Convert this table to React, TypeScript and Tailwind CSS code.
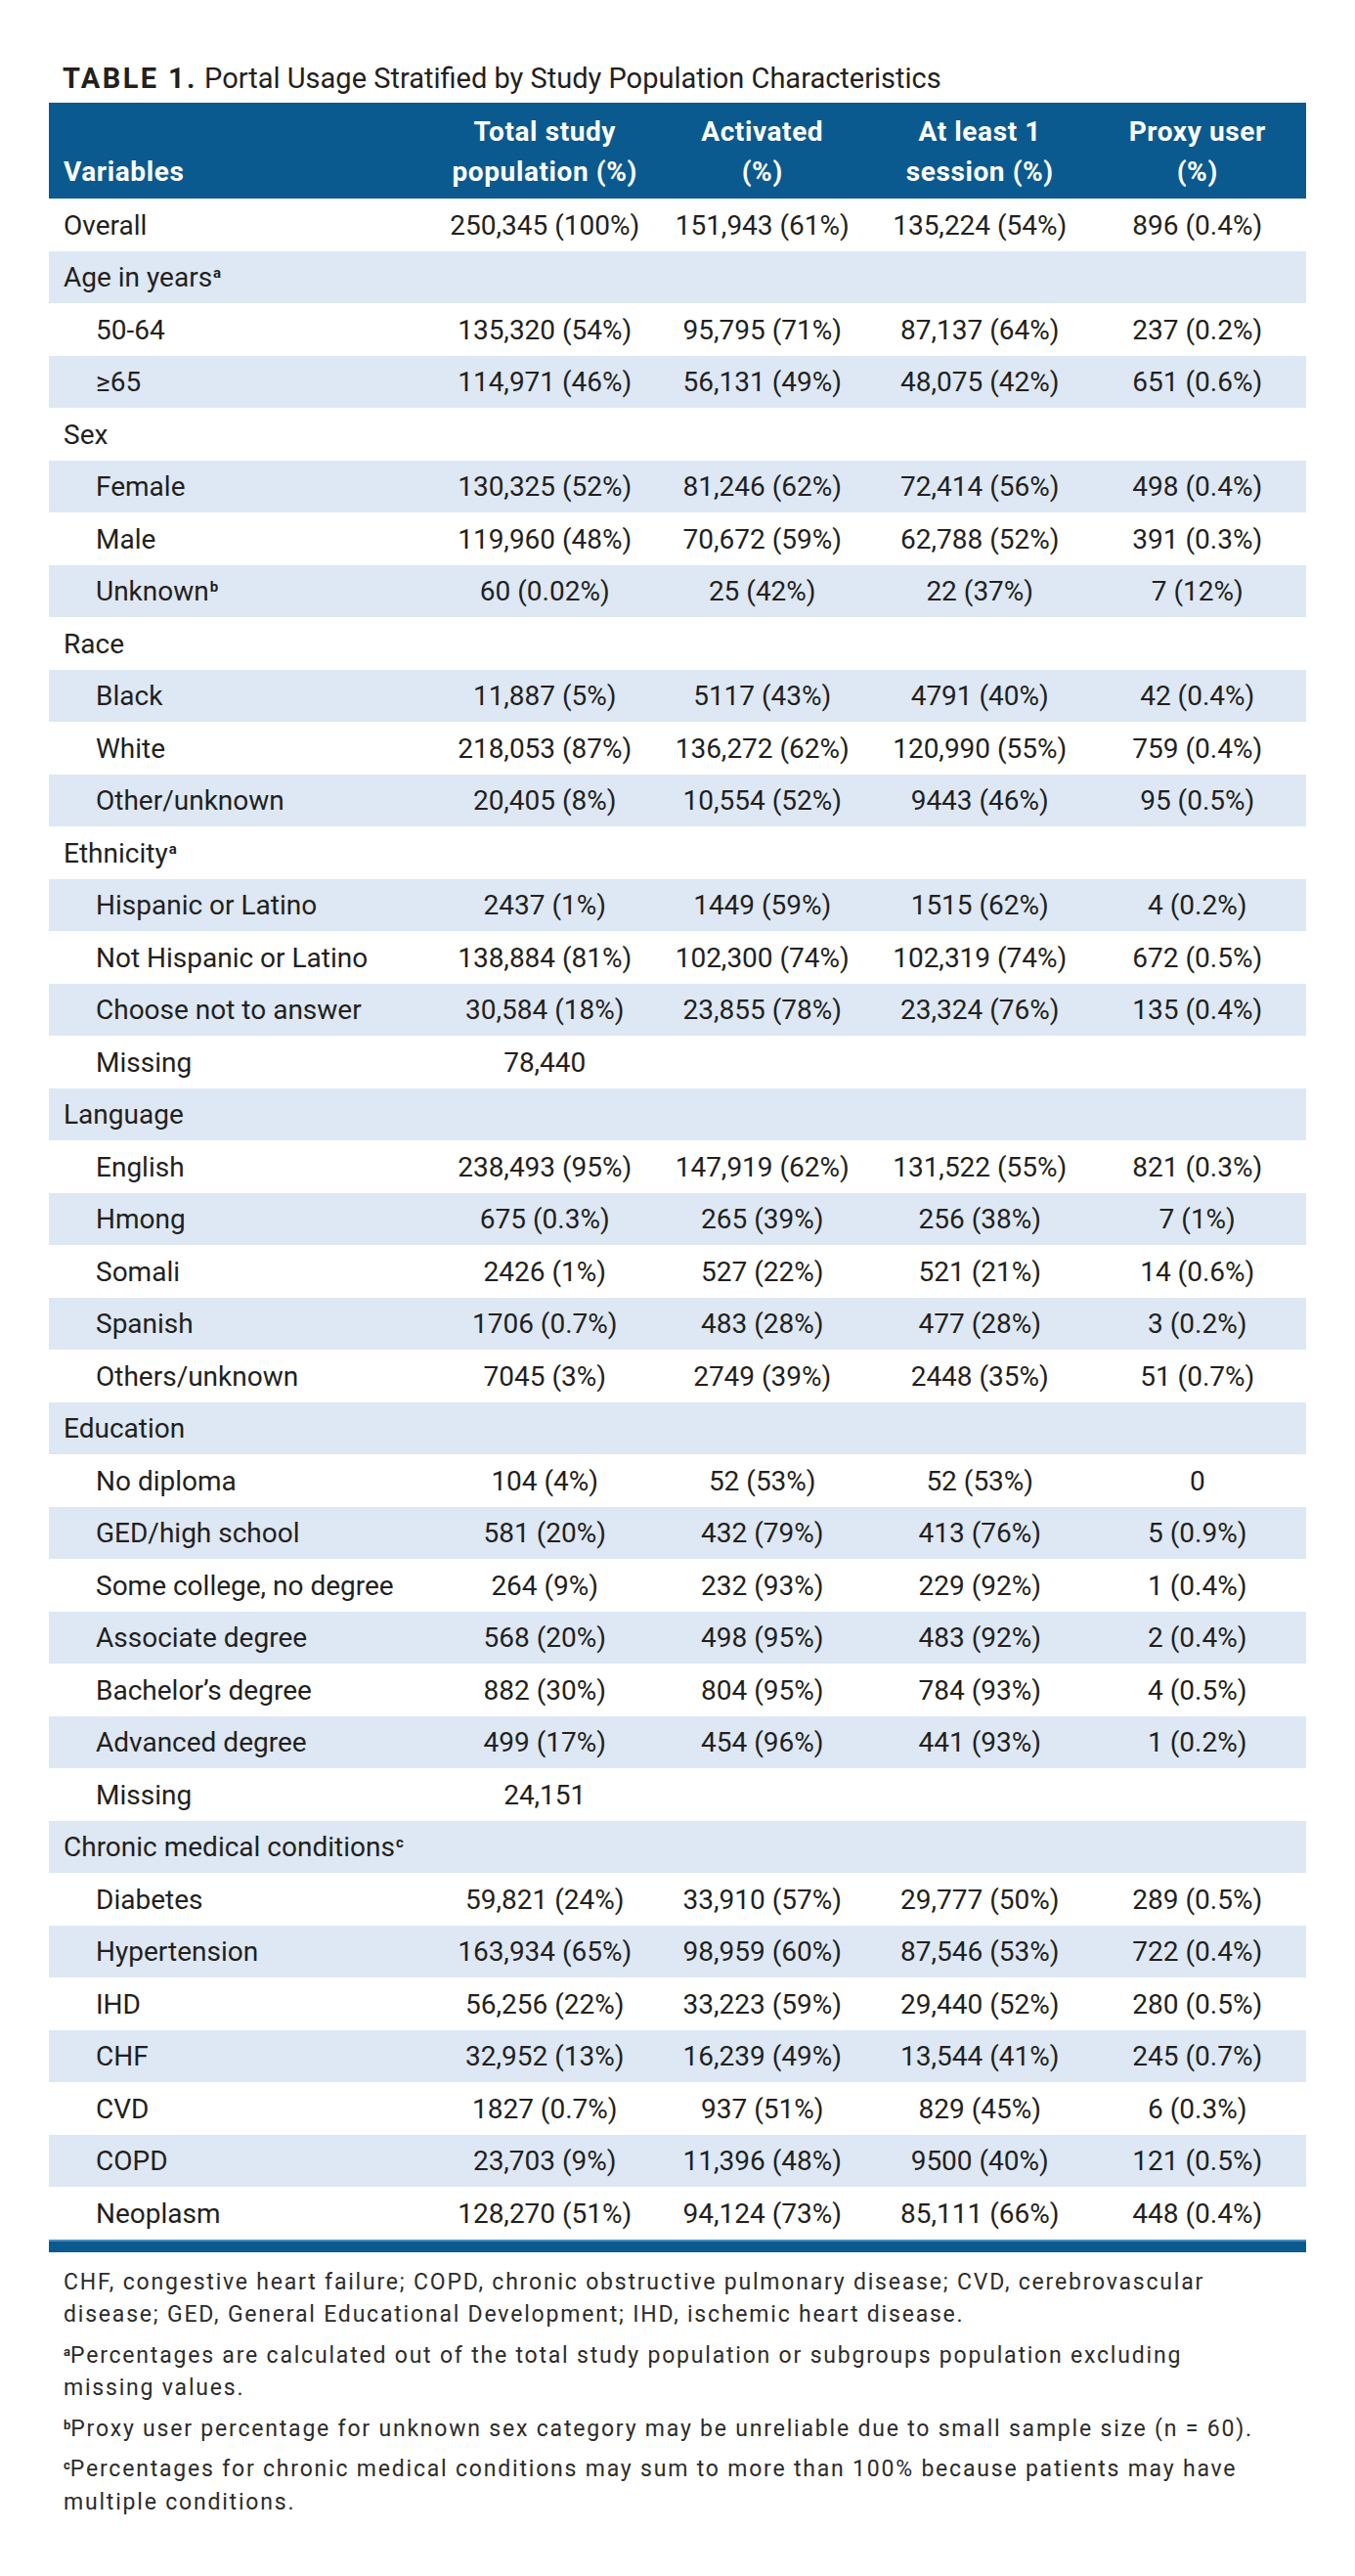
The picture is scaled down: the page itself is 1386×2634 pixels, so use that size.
import React from "react";

type Row = { label: React.ReactNode; indent?: boolean; values?: string[] };

const Sup = ({ c }: { c: string }) => (
  <span className="relative top-[-9px] ml-[1px] text-[15px] font-bold leading-none">{c}</span>
);

const rows: Row[] = [
  { label: "Overall", values: ["250,345 (100%)", "151,943 (61%)", "135,224 (54%)", "896 (0.4%)"] },
  { label: <>Age in years<Sup c="a" /></> },
  { label: "50-64", indent: true, values: ["135,320 (54%)", "95,795 (71%)", "87,137 (64%)", "237 (0.2%)"] },
  { label: "≥65", indent: true, values: ["114,971 (46%)", "56,131 (49%)", "48,075 (42%)", "651 (0.6%)"] },
  { label: "Sex" },
  { label: "Female", indent: true, values: ["130,325 (52%)", "81,246 (62%)", "72,414 (56%)", "498 (0.4%)"] },
  { label: "Male", indent: true, values: ["119,960 (48%)", "70,672 (59%)", "62,788 (52%)", "391 (0.3%)"] },
  { label: <>Unknown<Sup c="b" /></>, indent: true, values: ["60 (0.02%)", "25 (42%)", "22 (37%)", "7 (12%)"] },
  { label: "Race" },
  { label: "Black", indent: true, values: ["11,887 (5%)", "5117 (43%)", "4791 (40%)", "42 (0.4%)"] },
  { label: "White", indent: true, values: ["218,053 (87%)", "136,272 (62%)", "120,990 (55%)", "759 (0.4%)"] },
  { label: "Other/unknown", indent: true, values: ["20,405 (8%)", "10,554 (52%)", "9443 (46%)", "95 (0.5%)"] },
  { label: <>Ethnicity<Sup c="a" /></> },
  { label: "Hispanic or Latino", indent: true, values: ["2437 (1%)", "1449 (59%)", "1515 (62%)", "4 (0.2%)"] },
  { label: "Not Hispanic or Latino", indent: true, values: ["138,884 (81%)", "102,300 (74%)", "102,319 (74%)", "672 (0.5%)"] },
  { label: "Choose not to answer", indent: true, values: ["30,584 (18%)", "23,855 (78%)", "23,324 (76%)", "135 (0.4%)"] },
  { label: "Missing", indent: true, values: ["78,440", "", "", ""] },
  { label: "Language" },
  { label: "English", indent: true, values: ["238,493 (95%)", "147,919 (62%)", "131,522 (55%)", "821 (0.3%)"] },
  { label: "Hmong", indent: true, values: ["675 (0.3%)", "265 (39%)", "256 (38%)", "7 (1%)"] },
  { label: "Somali", indent: true, values: ["2426 (1%)", "527 (22%)", "521 (21%)", "14 (0.6%)"] },
  { label: "Spanish", indent: true, values: ["1706 (0.7%)", "483 (28%)", "477 (28%)", "3 (0.2%)"] },
  { label: "Others/unknown", indent: true, values: ["7045 (3%)", "2749 (39%)", "2448 (35%)", "51 (0.7%)"] },
  { label: "Education" },
  { label: "No diploma", indent: true, values: ["104 (4%)", "52 (53%)", "52 (53%)", "0"] },
  { label: "GED/high school", indent: true, values: ["581 (20%)", "432 (79%)", "413 (76%)", "5 (0.9%)"] },
  { label: "Some college, no degree", indent: true, values: ["264 (9%)", "232 (93%)", "229 (92%)", "1 (0.4%)"] },
  { label: "Associate degree", indent: true, values: ["568 (20%)", "498 (95%)", "483 (92%)", "2 (0.4%)"] },
  { label: "Bachelor’s degree", indent: true, values: ["882 (30%)", "804 (95%)", "784 (93%)", "4 (0.5%)"] },
  { label: "Advanced degree", indent: true, values: ["499 (17%)", "454 (96%)", "441 (93%)", "1 (0.2%)"] },
  { label: "Missing", indent: true, values: ["24,151", "", "", ""] },
  { label: <>Chronic medical conditions<Sup c="c" /></> },
  { label: "Diabetes", indent: true, values: ["59,821 (24%)", "33,910 (57%)", "29,777 (50%)", "289 (0.5%)"] },
  { label: "Hypertension", indent: true, values: ["163,934 (65%)", "98,959 (60%)", "87,546 (53%)", "722 (0.4%)"] },
  { label: "IHD", indent: true, values: ["56,256 (22%)", "33,223 (59%)", "29,440 (52%)", "280 (0.5%)"] },
  { label: "CHF", indent: true, values: ["32,952 (13%)", "16,239 (49%)", "13,544 (41%)", "245 (0.7%)"] },
  { label: "CVD", indent: true, values: ["1827 (0.7%)", "937 (51%)", "829 (45%)", "6 (0.3%)"] },
  { label: "COPD", indent: true, values: ["23,703 (9%)", "11,396 (48%)", "9500 (40%)", "121 (0.5%)"] },
  { label: "Neoplasm", indent: true, values: ["128,270 (51%)", "94,124 (73%)", "85,111 (66%)", "448 (0.4%)"] },
];

const FootSup = ({ c }: { c: string }) => (
  <span className="relative top-[-7px] text-[13px] font-bold leading-none tracking-normal">{c}</span>
);

export default function App() {
  return (
    <div className="w-[1386px] min-h-[2634px] bg-white font-['Roboto',sans-serif] text-[#231f20]">
      <div className="pt-[60px] pl-[64px] h-[100px] text-[29px] leading-[40px] whitespace-nowrap">
        <span className="font-bold tracking-[2.4px]">TABLE 1.</span> Portal Usage Stratified by Study Population Characteristics
      </div>
      <div className="mx-[50px] mt-[5px] w-[1286px]">
        <div className="flex h-[98px] items-end bg-[#0b5a8f] pb-[7px] text-[28px] font-bold leading-[41px] tracking-[0.6px] text-white">
          <div className="w-[396px] pl-[15px]">Variables</div>
          <div className="w-[222.5px] text-center">Total study<br />population (%)</div>
          <div className="w-[222.5px] text-center">Activated<br />(%)</div>
          <div className="w-[222.5px] text-center">At least 1<br />session (%)</div>
          <div className="w-[222.5px] text-center">Proxy user<br />(%)</div>
        </div>
        {rows.map((r, i) => (
          <div
            key={i}
            className={`flex h-[53.5px] items-center pt-[2px] text-[28px] leading-[32px] whitespace-nowrap ${
              i % 2 === 1 ? "bg-[#dde8f4]" : "bg-white"
            }`}
          >
            <div className={`w-[396px] ${r.indent ? "pl-[48px]" : "pl-[15px]"}`}>{r.label}</div>
            {[0, 1, 2, 3].map((k) => (
              <div key={k} className="w-[222.5px] text-center">
                {r.values ? r.values[k] : ""}
              </div>
            ))}
          </div>
        ))}
        <div className="h-[13px] border-t-2 border-[#4a8cc0] bg-[#0b5a8f]" />
        <div className="pt-[14px] pl-[15px] text-[23px] leading-[33.5px] tracking-[1.8px] text-[#2b2b2b] whitespace-nowrap">
          <p className="mb-[8px]">
            CHF, congestive heart failure; COPD, chronic obstructive pulmonary disease; CVD, cerebrovascular
            <br />
            disease; GED, General Educational Development; IHD, ischemic heart disease.
          </p>
          <p className="mb-[8px]">
            <FootSup c="a" />Percentages are calculated out of the total study population or subgroups population excluding
            <br />
            missing values.
          </p>
          <p className="mb-[8px]">
            <FootSup c="b" />Proxy user percentage for unknown sex category may be unreliable due to small sample size (n = 60).
          </p>
          <p className="mb-[8px]">
            <FootSup c="c" />Percentages for chronic medical conditions may sum to more than 100% because patients may have
            <br />
            multiple conditions.
          </p>
        </div>
      </div>
    </div>
  );
}
